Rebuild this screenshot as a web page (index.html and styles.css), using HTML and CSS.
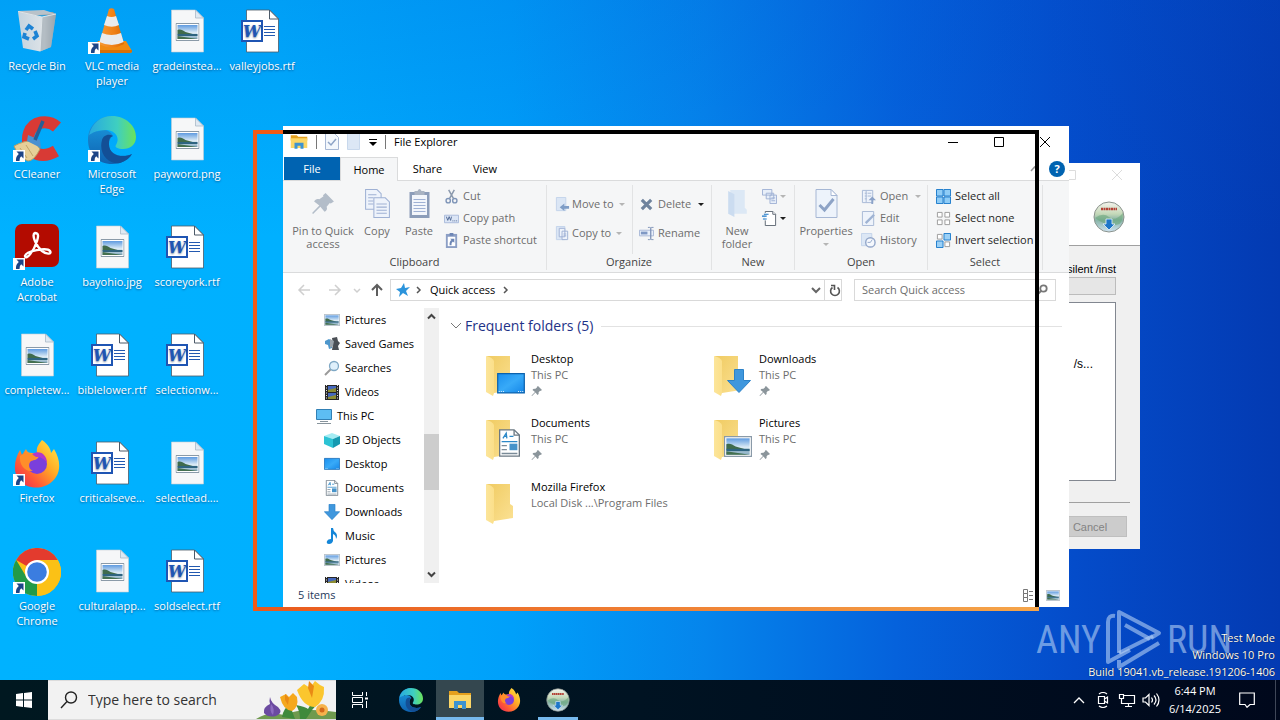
FILE: index.html
```html
<!DOCTYPE html>
<html lang="en">
<head>
<meta charset="utf-8">
<title>Desktop</title>
<link rel="stylesheet" href="styles.css">
</head>
<body>
<svg class="sprite" aria-hidden="true">
  <defs>
    <linearGradient id="g-sky" x1="0" y1="0" x2="0" y2="1"><stop offset="0" stop-color="#5f9be0"/><stop offset=".55" stop-color="#dcebf5"/><stop offset="1" stop-color="#7fa6bd"/></linearGradient>
    <linearGradient id="g-fold" x1="0" y1="0" x2="1" y2="0"><stop offset="0" stop-color="#fce59a"/><stop offset="1" stop-color="#fbdf8a"/></linearGradient>
    <linearGradient id="g-back" x1="0" y1="0" x2="1" y2="1"><stop offset="0" stop-color="#f0cb62"/><stop offset="1" stop-color="#fbe193"/></linearGradient>
    <linearGradient id="g-edge1" x1="0" y1="0" x2="1" y2="0"><stop offset="0" stop-color="#27a9e0"/><stop offset=".6" stop-color="#3fcfc0"/><stop offset="1" stop-color="#6be35a"/></linearGradient>
    <linearGradient id="g-edge2" x1="0" y1="0" x2="0" y2="1"><stop offset="0" stop-color="#1b9de2"/><stop offset="1" stop-color="#0f62b0"/></linearGradient>
    <linearGradient id="g-fox" x1="1" y1="0" x2="0" y2="1"><stop offset="0" stop-color="#fff04a"/><stop offset=".4" stop-color="#ffab26"/><stop offset=".7" stop-color="#ff5a36"/><stop offset="1" stop-color="#e8205c"/></linearGradient>
    <linearGradient id="g-bin" x1="0" y1="0" x2="1" y2="0"><stop offset="0" stop-color="#c3d3df"/><stop offset=".7" stop-color="#dfe4e8"/><stop offset="1" stop-color="#9fa9b1"/></linearGradient>
    <linearGradient id="g-blue" x1="0" y1="0" x2="1" y2="1"><stop offset="0" stop-color="#1b8fee"/><stop offset=".5" stop-color="#38aaf8"/><stop offset="1" stop-color="#1486e8"/></linearGradient>
    <linearGradient id="g-cone" x1="0" y1="0" x2="1" y2="0"><stop offset="0" stop-color="#f79a35"/><stop offset=".6" stop-color="#f08014"/><stop offset="1" stop-color="#d96a05"/></linearGradient>
    <linearGradient id="g-globe" x1="0" y1="0" x2="0" y2="1"><stop offset="0" stop-color="#f5f4ee"/><stop offset=".4" stop-color="#c4d8b8"/><stop offset=".6" stop-color="#86b3a6"/><stop offset="1" stop-color="#cfe3f2"/></linearGradient>

    <symbol id="shortcut" viewBox="0 0 12 12"><path fill="#fff" d="M0 0h12v12H0z"/><path fill="#1d4587" d="M3.500 1.500h7v7L8.200 6.300Q6.500 7.500 6.500 11H3Q2.500 6.500 5.800 4z"/></symbol>
    <symbol id="photo" viewBox="0 0 24 18"><path fill="#fff" stroke="#8a9aa8" d="M.5.500h23v17H.5z"/><path fill="url(#g-sky)" d="M2 2h20v14H2z"/><path fill="#3f6b4c" d="M2 7c3-1 5 0 8 2l9 2.500H2z"/><path fill="#2e6480" d="M2 11h20v2H2z"/><path fill="#44704f" d="M2 16h20l-20-3z"/></symbol>
    <symbol id="file-image" viewBox="0 0 48 48"><path fill="#f6f7f8" stroke="#c6cdd3" stroke-width=".6" d="M8.500 2h24l8 8v34h-32z"/><path fill="#dfe9f2" stroke="#a9b9c7" stroke-width=".8" d="M32.500 2v8h8z"/><use href="#photo" x="12.500" y="15" width="24" height="18"/></symbol>
    <symbol id="file-word" viewBox="0 0 48 48"><path fill="#fff" stroke="#4c5a68" stroke-width=".8" d="M8.500 2h23l9 9v33h-32z"/><path fill="#fff" stroke="#4c5a68" stroke-width="1" d="M31.500 2v9h9z"/><path stroke="#2359b0" d="M26 18.500h11M26 21.500h11M26 24.500h11M26 27.500h11"/><path fill="#fff" stroke="#1f55b3" stroke-width="2" d="M4 13h20v20H4z"/><text x="14" y="29" text-anchor="middle" class="word-mark">W</text></symbol>

    <symbol id="bin" viewBox="0 0 48 48"><path fill="#8d989f" d="M5 4 40 4 43 7 10 8z"/><path fill="#b9c2c9" d="M5 3l26-1 12 4-33 2z"/><path fill="url(#g-bin)" d="M5 4l5 36 17 3.500 11-4.500 5-33-14 3z"/><path fill="#98a3ab" opacity=".6" d="M29 9l14-3-5 33-11 4.500z"/><path fill="none" stroke="#dfe5e9" d="M5 3.500l24 5.500 14-3M29 9l-2 34"/><g fill="none" stroke="#1d83d4" stroke-width="3.600"><path d="M13 22l3-4 4 3M22 23l2 5-4 3M16 31l-5-2 1-4"/></g></symbol>
    <symbol id="vlc" viewBox="0 0 48 48"><path fill="#f08a10" d="M10 33 38 33 44 43Q44 45 41 45H12Q6 45 5 43z"/><path fill="#d87006" d="M5 42h39v2q-1 1-3 1H8q-3-1-3-3z"/><path fill="url(#g-cone)" d="M21 1q2.500-1.500 5 0L36 36Q24 43 11 36z"/><path fill="#e9ebec" d="M19 8q4.500 2 9 0l3 9q-7 3.500-15 0zM14 25q9.500 4 19 0l2.600 9Q24 40 11.400 34z"/></symbol>
    <symbol id="ccleaner" viewBox="0 0 48 48"><path fill="none" stroke="#d83a35" stroke-width="12" d="M44 11C35 3 20 5 16 17c-5 15 8 29 27 18"/><path fill="#e6cf98" stroke="#b99d62" d="M1 30q11-6 20-5l6 8q-6 12-12 12-10-4-14-15z"/><path fill="none" stroke="#c2a568" d="M7 32l7 10M13 29l7 11"/><path fill="#4a90d0" d="M15 19l12 5 1 8-14-7z"/><path stroke="#275f95" stroke-width="3.500" d="M22 24L30 5"/></symbol>
    <symbol id="edge" viewBox="0 0 48 48"><path fill="url(#g-edge2)" d="M24 0C10 0 0 10 0 24s10 24 24 24c9 0 16-4 20-10-9 4-23 2-23-10 0-4 2-7 4-8-6-12-22-4-25 5z"/><path fill="#134f96" d="M14 24c-4 15 8 25 18 23 6-2 10-5 12-9-10 5-24 1-23-11 0-4 1-6 4-7-5-3-10 0-11 4z"/><path fill="url(#g-edge1)" d="M1 19C4 7 13 0 24 0c14 0 24 10 24 21 0 8-6 12-13 12-5 0-9-2-7-4 5-8-2-15-10-15C9 14 4 17 1 19z"/></symbol>
    <symbol id="acrobat" viewBox="0 0 48 48"><rect x="2" y="0" width="44" height="43" rx="7" fill="#b30b00"/><path fill="none" stroke="#fff" stroke-width="2.400" d="M22 9c-4 1 1 13 7 18 5 4 10 3 8 0-3-4-24 0-25 5 1 5 9-5 12-15 2-6 1-8-2-8z"/></symbol>
    <symbol id="firefox" viewBox="0 0 48 48"><path fill="url(#g-fox)" d="M29 0c7 5 9 10 9 13l3-4c6 10 7 20 2 28-8 13-28 14-37 3C-1 31 2 18 7 10l2 5 4-6c1 3 3 4 6 4h5c-1-6 2-9 5-13z"/><circle cx="24" cy="24" r="10" fill="#7a3fdc"/><path fill="#ff8e2a" d="M7 16c5-4 10-3 13-1l6 1c-1 4-5 4-8 5-4 4-1 9 2 10-9 1-14-7-13-15z"/><path fill="#b338c8" d="M19 14c8-5 15 1 15 9-3-5-7-6-11-6z"/></symbol>
    <symbol id="chrome" viewBox="0 0 48 48"><circle cx="24" cy="24" r="24" fill="#fbc116"/><path fill="#e33b2e" d="M24 24L3.200 12A24 24 0 0 1 44.800 12H24z"/><path fill="#229a48" d="M24 24L24 48A24 24 0 0 1 3.200 12L14 30z"/><path fill="#fbc116" d="M24 48l10.400-18L34 12h10.800A24 24 0 0 1 24 48z"/><circle cx="24" cy="24" r="12" fill="#fff"/><circle cx="24" cy="24" r="9.800" fill="#3b7de0"/></symbol>
    <symbol id="setup" viewBox="0 0 32 32"><circle cx="16" cy="16" r="15" fill="url(#g-globe)" stroke="#8b938d"/><path fill="#6aa77b" opacity=".6" d="M2 17q8-6 14-1t14-4q0 12-7 12-11 1-21-7z"/><path stroke="#b44136" stroke-width="2.500" stroke-dasharray="2 .5" d="M8 8h16"/><path fill="#1d76c8" stroke="#e9f4fb" stroke-width=".8" d="M13 18h6v5h3l-6 6-6-6h3z"/></symbol>
    <symbol id="explorer" viewBox="0 0 24 20"><path fill="#e5a01d" d="M1 1h8l2 2h12v5H1z"/><path fill="#fbd667" d="M1 5h22v13H1z"/><path fill="#3d93d1" d="M6 11h12v8h-4v-4h-4v4H6z"/></symbol>

    <symbol id="pin" viewBox="0 0 24 24"><path fill="currentColor" d="M14 2l8 8-3 2-1-.500-3 3.500c1 2 0 4-2 5l-4-5-7 7-1-1 7-7-5-4c1-2 3-3 5-2l4-3-.500-1z"/></symbol>
    <symbol id="copy" viewBox="0 0 24 28"><g fill="#eef3fb" stroke="#9fb1d4"><path d="M.5.500h11l4 4v15H.5z"/><path d="M8.500 8.500h11l4 4v15h-15z"/></g><path stroke="#9fb1d4" d="M3 5.500h8M3 8.500h5M3 11.500h5M3 14.500h5M11 14.500h10M11 17.500h10M11 20.500h10M11 23.500h10"/></symbol>
    <symbol id="paste" viewBox="0 0 22 29"><path fill="#8c9db9" d="M1 3h20v26H1z"/><path fill="#f3f6fb" d="M3.500 6h15v20h-15z"/><path fill="#a9b3c2" d="M6 2h3q2-4 4 0h3v4H6z"/><path stroke="#9fb1d4" d="M5 10.500h12M5 13.500h12M5 16.500h12M5 19.500h12M5 22.500h12"/></symbol>
    <symbol id="cut" viewBox="0 0 16 16"><path fill="none" stroke="#8b99ad" stroke-width="1.600" d="M5 1l5 9M11 1L6 10"/><g fill="none" stroke="#7f95b8" stroke-width="1.500"><circle cx="4.500" cy="12.500" r="2.300"/><circle cx="11.500" cy="12.500" r="2.300"/></g></symbol>
    <symbol id="path" viewBox="0 0 16 16"><path fill="#dbe5f5" stroke="#a9bada" d="M.5 4.500h15v8H.5z"/><path fill="none" stroke="#4f6794" d="M2.500 6l1.500 4 1.500-4L7 10l1-4M9 10.500h1M11 10.500h1M13 10.500h1"/></symbol>
    <symbol id="shortpaste" viewBox="0 0 16 16"><path fill="#8c9fc5" d="M2 1h12v15H2z"/><path fill="#fff" d="M4 4h8v10H4z"/><path fill="#6d86b5" d="M6 0h4v3H6zM6.500 6H11v4.500L9.500 9q-2 1-1.500 4H6q-.5-4 2-5.500z"/></symbol>
    <symbol id="move" viewBox="0 0 16 16"><path fill="#dbe6f5" stroke="#c3d3ea" d="M1.500.500h10v14h-10z"/><path fill="#7f9dc6" d="M5 11l5-4v2.500h5v3h-5V15z"/></symbol>
    <symbol id="copyto" viewBox="0 0 16 16"><path fill="#dbe6f5" stroke="#c3d3ea" d="M1.500.500h9v14h-9z"/><path fill="#eef3fb" stroke="#9fb1d4" d="M4.500 2.500h6v9h-6zM7.500 5.500h6v9h-6zM9 8.500h3M9 10.500h3"/></symbol>
    <symbol id="delete" viewBox="0 0 16 16"><path stroke="#6f839d" stroke-width="3.400" d="M3 3l10 10M13 3L3 13"/></symbol>
    <symbol id="rename" viewBox="0 0 16 16"><path fill="#e8effa" stroke="#a7b7d6" d="M.5 4.500h15v6H.5z"/><path fill="#7f98c4" d="M2 6h7v3H2z"/><path fill="none" stroke="#7f93b8" d="M9.500 1.500h2q1 0 1 1v11q0 1-1 1h-2M15.500 1.500h-2q-1 0-1 1v11q0 1 1 1h2"/></symbol>
    <symbol id="newfolder" viewBox="0 0 20 28"><path fill="#dce8f5" d="M3 1h14v17l2 2v4H4z"/><path fill="#cbdcf0" d="M1 2l6 3v22l-6-3z"/></symbol>
    <symbol id="newitem" viewBox="0 0 16 16"><g fill="#e8eff9" stroke="#9fb1d4"><path d="M.5.500h10v6H.5zM4.500 4.500h8v6h-8zM8.500 6.500h7v9h-7z"/></g><path stroke="#9fb1d4" d="M10 9.500h4M10 12.500h4"/></symbol>
    <symbol id="easy" viewBox="0 0 16 16"><path fill="#fff" stroke="#5b6470" d="M3.500.500h8l3 3v12h-11z"/><path fill="#fff" stroke="#5b6470" d="M11.500.500v3h3"/><path stroke="#fff" stroke-width="2" d="M3.500 2v8"/><path stroke="#1b77c8" stroke-width="1.200" d="M2 3.500h5M0 5.500h5M1 8.500h4"/></symbol>
    <symbol id="props" viewBox="0 0 22 29"><path fill="#edf3fb" stroke="#a6b7d4" d="M.5.500h15l6 6v22H.5z"/><path fill="#fff" stroke="#a6b7d4" d="M15.500.500v6h6z"/><path fill="none" stroke="#8da3c6" stroke-width="3" d="M4 16l5 5 9-11"/></symbol>
    <symbol id="open" viewBox="0 0 16 16"><path fill="#eef3fb" stroke="#a6b7d4" d="M1.500 1.500h11v13h-11z"/><path stroke="#a6b7d4" d="M4 4.500h2M7 4.500h4M4 7.500h2M7 7.500h4M4 10.500h2M5.500 2v12"/><path fill="#8ba2c8" d="M12 8l4 4h-3v4h-2v-4H8z"/></symbol>
    <symbol id="edit" viewBox="0 0 16 16"><path fill="#eef3fb" stroke="#a6b7d4" d="M1.500.500h12v15h-12z"/><path stroke="#9fb3d3" stroke-width="2.500" d="M5 13l9-9"/></symbol>
    <symbol id="history" viewBox="0 0 16 16"><path fill="#dce7f5" stroke="#c3d3ea" d="M.5.500h11v13H.5z"/><circle cx="10" cy="10" r="5" fill="#f5f8fd" stroke="#93a7ca" stroke-width="1.500"/><path fill="none" stroke="#93a7ca" d="M12 7l-2 3H7"/></symbol>
    <symbol id="selall" viewBox="0 0 16 16"><g fill="#8fccf6" stroke="#1979ca"><path d="M.5.500h7v7h-7zM8.500.500h7v7h-7zM.5 8.500h7v7h-7zM8.500 8.500h7v7h-7z"/></g></symbol>
    <symbol id="selnone" viewBox="0 0 16 16"><path fill="#fff" stroke="#9a9a9a" d="M1.500 1.500h5v5h-5zM9.500 1.500h5v5h-5zM1.500 9.500h5v5h-5zM9.500 9.500h5v5h-5z"/></symbol>
    <symbol id="selinv" viewBox="0 0 16 16"><path fill="#fff" stroke="#9a9a9a" d="M1.500 1.500h5v5h-5zM9.500 9.500h5v5h-5z"/><path fill="#9bd0f6" stroke="#1979ca" d="M8.500.500h7v7h-7zM.5 8.500h7v7h-7z"/></symbol>

    <symbol id="n-pic" viewBox="0 0 16 16"><use href="#photo" y="2" width="16" height="12"/></symbol>
    <symbol id="n-games" viewBox="0 0 16 16"><path fill="#4e97cc" d="M1 5l4-2 3 2v7l-3 1-1-4-3-1z"/><path fill="#4a4f55" d="M8 2l5-1 1 4 2 2-2 3 1 4H8l1-6z"/><path fill="#9aa3ab" d="M6 3l4 2-1 5-3 2z"/></symbol>
    <symbol id="n-search" viewBox="0 0 16 16"><path stroke="#9a9a9a" stroke-width="2" d="M1 15l6-6"/><circle cx="10" cy="6" r="4.500" fill="#dff0fb" stroke="#7fa8c5" stroke-width="1.300"/></symbol>
    <symbol id="n-video" viewBox="0 0 16 16"><path fill="#262626" d="M1 1h14v15H1z"/><path stroke="#e8e8e8" stroke-dasharray="1 1.500" d="M2.500 1v15M13.500 1v15"/><path fill="#4568bd" d="M4 2h8v6H4zM4 9h8v6H4z"/><path fill="#8d8d32" d="M4 6l8-2v4H4zM4 13l8-2v4H4z"/></symbol>
    <symbol id="n-pc" viewBox="0 0 16 16"><path fill="#5dbdf3" stroke="#3180b5" d="M.5 1.500h15v10H.5z"/><path stroke="#87949c" d="M4 13.500h8M1 15.500h14"/></symbol>
    <symbol id="n-3d" viewBox="0 0 16 16"><path fill="#a5ecf3" d="M0 4l8-3 8 3-7 3z"/><path fill="#2cc3d4" d="M0 4l9 3v9l-9-4z"/><path fill="#1599b0" d="M9 7l7-3v8l-7 4z"/></symbol>
    <symbol id="n-desk" viewBox="0 0 16 12"><path fill="url(#g-blue)" stroke="#0b62ad" stroke-width=".7" d="M.4.400h15.200v11H.4z"/><path stroke="#d7ecfb" stroke-dasharray=".6 .6" stroke-width=".6" d="M1 10.600h3M12 10.600h3"/></symbol>
    <symbol id="n-doc" viewBox="0 0 16 21"><path fill="#fff" stroke="#6b7883" d="M.5.500h11l4 4v16H.5z"/><path fill="none" stroke="#6b7883" d="M11.500.500v4h4"/><path fill="none" stroke="#2b88c8" d="M3 7l2.500-4L6 7M4 5.500h2M8 5.500h3M2 9.500h12"/><path stroke="#7a8b98" d="M2 12.500h4M2 15.500h4M2 18.500h12"/><path fill="#4693ca" d="M8 11h6v5H8z"/></symbol>
    <symbol id="n-down" viewBox="0 0 24 24"><path fill="#3f97dd" stroke="#2c82c8" d="M7.500.500h9v11h7L12 23.500.5 11.500h7z"/></symbol>
    <symbol id="n-music" viewBox="0 0 16 16"><path fill="#1486d8" d="M7 0h2q0 3 3 5 2 3 0 6 0-4-3-5v7q-1 3-4 3t-2-3q1-2 4-2z"/></symbol>
    <symbol id="folder" viewBox="0 0 40 42"><path fill="url(#g-back)" d="M2 1h23v20l3 2v12l-19 3z"/><path fill="url(#g-fold)" d="M1 1q6 1 8 5v32l-1 3-7-4z"/></symbol>
    <symbol id="f-desk" viewBox="0 0 40 42"><use href="#folder"/><use href="#n-desk" x="12" y="18" width="28" height="21"/></symbol>
    <symbol id="f-down" viewBox="0 0 40 42"><use href="#folder"/><use href="#n-down" x="14" y="14" width="24" height="24"/></symbol>
    <symbol id="f-doc" viewBox="0 0 40 42"><use href="#folder"/><use href="#n-doc" x="14" y="10" width="21" height="28"/></symbol>
    <symbol id="f-pic" viewBox="0 0 40 42"><use href="#folder"/><use href="#photo" x="11" y="17" width="28" height="21"/></symbol>
  </defs>
</svg>

<main class="desktop">
  <ul class="icons">
    <li><svg class="app"><use href="#bin"/></svg><span>Recycle Bin</span></li>
    <li><svg class="app"><use href="#ccleaner"/></svg><svg class="arrow"><use href="#shortcut"/></svg><span>CCleaner</span></li>
    <li><svg class="app"><use href="#acrobat"/></svg><svg class="arrow"><use href="#shortcut"/></svg><span>Adobe<br>Acrobat</span></li>
    <li><svg class="app"><use href="#file-image"/></svg><span>completew...</span></li>
    <li><svg class="app"><use href="#firefox"/></svg><svg class="arrow"><use href="#shortcut"/></svg><span>Firefox</span></li>
    <li><svg class="app"><use href="#chrome"/></svg><svg class="arrow"><use href="#shortcut"/></svg><span>Google<br>Chrome</span></li>
    <li><svg class="app"><use href="#vlc"/></svg><svg class="arrow"><use href="#shortcut"/></svg><span>VLC media<br>player</span></li>
    <li><svg class="app"><use href="#edge"/></svg><svg class="arrow"><use href="#shortcut"/></svg><span>Microsoft<br>Edge</span></li>
    <li><svg class="app"><use href="#file-image"/></svg><span>bayohio.jpg</span></li>
    <li><svg class="app"><use href="#file-word"/></svg><span>biblelower.rtf</span></li>
    <li><svg class="app"><use href="#file-word"/></svg><span>criticalseve...</span></li>
    <li><svg class="app"><use href="#file-image"/></svg><span>culturalapp...</span></li>
    <li><svg class="app"><use href="#file-image"/></svg><span>gradeinstea...</span></li>
    <li><svg class="app"><use href="#file-image"/></svg><span>payword.png</span></li>
    <li><svg class="app"><use href="#file-word"/></svg><span>scoreyork.rtf</span></li>
    <li><svg class="app"><use href="#file-word"/></svg><span>selectionw...</span></li>
    <li><svg class="app"><use href="#file-image"/></svg><span>selectlead....</span></li>
    <li><svg class="app"><use href="#file-word"/></svg><span>soldselect.rtf</span></li>
    <li><svg class="app"><use href="#file-word"/></svg><span>valleyjobs.rtf</span></li>
  </ul>

  <section class="setup" aria-label="Setup">
    <header class="setup-head">
      <svg viewBox="0 0 60 12" width="60" height="12" fill="none" stroke="#dcdcdc"><path d="M1.500 1.500h9v9h-9zM47 1l10 10M57 1L47 11"/></svg>
      <svg class="setup-logo"><use href="#setup"/></svg>
    </header>
    <div class="setup-body">
      <p class="setup-line">silent /inst</p>
      <div class="setup-progress"></div>
      <div class="setup-list">/s...</div>
    </div>
    <footer class="setup-foot"><button class="setup-cancel" disabled>Cancel</button></footer>
  </section>

  <section class="window" aria-label="File Explorer">
    <header class="titlebar">
      <svg class="t-app"><use href="#explorer"/></svg>
      <i class="t-sep"></i>
      <svg width="14" height="17" viewBox="0 0 14 17"><path fill="#f3f7fc" stroke="#a6b7d4" d="M.5.500h9l4 4v12H.5z"/><path fill="none" stroke="#8da3c6" stroke-width="1.500" d="M3 9l3 3 5-6"/></svg>
      <svg width="14" height="17" viewBox="0 0 14 17"><path fill="#dce7f5" stroke="#c8d8ec" d="M.5.500h12v16H.5z"/></svg>
      <svg width="8" height="8" viewBox="0 0 8 8"><path d="M0 1h8v1H0zM0 4h8L4 8z"/></svg>
      <i class="t-sep"></i>
      <h1>File Explorer</h1>
      <div class="controls">
        <button aria-label="Minimize"><svg width="12" height="12" viewBox="0 0 12 12" fill="none" stroke="#000"><path d="M1 6.500h10"/></svg></button>
        <button aria-label="Maximize"><svg width="12" height="12" viewBox="0 0 12 12" fill="none" stroke="#000"><path d="M1.500 1.500h9v9h-9z"/></svg></button>
        <button aria-label="Close"><svg width="12" height="12" viewBox="0 0 12 12" fill="none" stroke="#000"><path d="M1 1l10 10M11 1L1 11"/></svg></button>
      </div>
    </header>
    <nav class="tabs">
      <button class="tab file">File</button>
      <button class="tab active">Home</button>
      <button class="tab">Share</button>
      <button class="tab">View</button>
      <div class="tab-end">
        <svg width="9" height="6" viewBox="0 0 9 6" fill="none" stroke="#9a9a9a" stroke-width="1.500"><path d="M1 5l3.500-4L8 5"/></svg>
        <button class="help" aria-label="Help">?</button>
      </div>
    </nav>
    <div class="ribbon">
      <div class="group g-clip">
        <div class="tools">
          <button class="big b-pin"><svg class="pin-big"><use href="#pin"/></svg>Pin to Quick access</button>
          <button class="big"><svg><use href="#copy"/></svg>Copy</button>
          <button class="big"><svg><use href="#paste"/></svg>Paste</button>
          <div class="stack">
            <button><svg><use href="#cut"/></svg>Cut</button>
            <button><svg><use href="#path"/></svg>Copy path</button>
            <button><svg><use href="#shortpaste"/></svg>Paste shortcut</button>
          </div>
        </div>
        <h2>Clipboard</h2>
      </div>
      <div class="group g-org">
        <div class="tools">
          <div class="stack wide">
            <button><svg><use href="#move"/></svg>Move to<i class="drop"></i></button>
            <button><svg><use href="#copyto"/></svg>Copy to<i class="drop"></i></button>
          </div>
          <div class="stack wide ruled">
            <button><svg><use href="#delete"/></svg>Delete<i class="drop dark"></i></button>
            <button><svg><use href="#rename"/></svg>Rename</button>
          </div>
        </div>
        <h2>Organize</h2>
      </div>
      <div class="group g-new">
        <div class="tools">
          <button class="big"><svg><use href="#newfolder"/></svg>New<br>folder</button>
          <div class="stack">
            <button aria-label="New item"><svg><use href="#newitem"/></svg><i class="drop"></i></button>
            <button aria-label="Easy access"><svg><use href="#easy"/></svg><i class="drop dark"></i></button>
          </div>
        </div>
        <h2>New</h2>
      </div>
      <div class="group g-open">
        <div class="tools">
          <button class="big b-prop"><svg><use href="#props"/></svg>Properties<i class="drop"></i></button>
          <div class="stack">
            <button><svg><use href="#open"/></svg>Open<i class="drop"></i></button>
            <button><svg><use href="#edit"/></svg>Edit</button>
            <button><svg><use href="#history"/></svg>History</button>
          </div>
        </div>
        <h2>Open</h2>
      </div>
      <div class="group g-sel">
        <div class="tools">
          <div class="stack on">
            <button><svg><use href="#selall"/></svg>Select all</button>
            <button><svg><use href="#selnone"/></svg>Select none</button>
            <button><svg><use href="#selinv"/></svg>Invert selection</button>
          </div>
        </div>
        <h2>Select</h2>
      </div>
    </div>
    <div class="address">
      <svg class="arrows" viewBox="0 0 88 16" fill="none" stroke="#cfcfcf" stroke-width="1.500"><path d="M14 8H3M8 3L3 8l5 5M33 8h11M39 3l5 5-5 5"/><path d="M58 7l3 3 3-3"/><path stroke="#5e5e5e" stroke-width="2" d="M81 14V3M76 8l5-5 5 5"/></svg>
      <div class="crumbs">
        <svg width="16" height="16" viewBox="0 0 16 16"><path fill="#2b94dc" d="M9 1l1 5 5-1-4 4 2 5-5-3-4 4 1-5-4-3 5-1z"/></svg>
        <svg width="6" height="8" viewBox="0 0 6 8" fill="none" stroke="#555" stroke-width="1.500"><path d="M1 1l3 3-3 3"/></svg>
        <span>Quick access</span>
        <svg width="6" height="8" viewBox="0 0 6 8" fill="none" stroke="#555" stroke-width="1.500"><path d="M1 1l3 3-3 3"/></svg>
        <svg class="crumb-drop" width="10" height="7" viewBox="0 0 10 7" fill="none" stroke="#666" stroke-width="2"><path d="M1 1l4 4 4-4"/></svg>
        <button class="refresh" aria-label="Refresh"><svg width="12" height="13" viewBox="0 0 12 13" fill="none" stroke="#555" stroke-width="1.600"><path d="M8.500 3.500a4.400 4.400 0 1 1-5 0M2 1.500h3.500V6"/></svg></button>
      </div>
      <div class="search">
        <input type="search" aria-label="Search Quick access" placeholder="Search Quick access">
        <svg width="12" height="12" viewBox="0 0 12 12" fill="none" stroke="#777" stroke-width="1.800"><circle cx="7.500" cy="4.500" r="3.200"/><path d="M5 7l-4 4"/></svg>
      </div>
    </div>
    <div class="body">
      <ul class="tree">
        <li><svg><use href="#n-pic"/></svg>Pictures</li>
        <li><svg><use href="#n-games"/></svg>Saved Games</li>
        <li><svg><use href="#n-search"/></svg>Searches</li>
        <li><svg><use href="#n-video"/></svg>Videos</li>
        <li class="root"><svg><use href="#n-pc"/></svg>This PC</li>
        <li><svg><use href="#n-3d"/></svg>3D Objects</li>
        <li><svg><use href="#n-desk"/></svg>Desktop</li>
        <li><svg><use href="#n-doc"/></svg>Documents</li>
        <li><svg><use href="#n-down"/></svg>Downloads</li>
        <li><svg><use href="#n-music"/></svg>Music</li>
        <li><svg><use href="#n-pic"/></svg>Pictures</li>
        <li><svg><use href="#n-video"/></svg>Videos</li>
      </ul>
      <div class="scroll">
        <svg width="9" height="7" viewBox="0 0 9 7" fill="none" stroke="#444" stroke-width="2"><path d="M1 5.500L4.500 2 8 5.500"/></svg>
        <i class="thumb"></i>
        <svg width="9" height="7" viewBox="0 0 9 7" fill="none" stroke="#444" stroke-width="2"><path d="M1 1.500L4.500 5 8 1.500"/></svg>
      </div>
      <div class="content">
        <h2><svg width="12" height="8" viewBox="0 0 12 8" fill="none" stroke="#777"><path d="M1 1l5 5 5-5"/></svg>Frequent folders (5)</h2>
        <div class="tiles">
          <div class="tile"><svg><use href="#f-desk"/></svg><p><b>Desktop</b><span>This PC</span><svg class="pin"><use href="#pin"/></svg></p></div>
          <div class="tile"><svg><use href="#f-down"/></svg><p><b>Downloads</b><span>This PC</span><svg class="pin"><use href="#pin"/></svg></p></div>
          <div class="tile"><svg><use href="#f-doc"/></svg><p><b>Documents</b><span>This PC</span><svg class="pin"><use href="#pin"/></svg></p></div>
          <div class="tile"><svg><use href="#f-pic"/></svg><p><b>Pictures</b><span>This PC</span><svg class="pin"><use href="#pin"/></svg></p></div>
          <div class="tile"><svg><use href="#folder"/></svg><p><b>Mozilla Firefox</b><span>Local Disk ...\Program Files</span></p></div>
        </div>
      </div>
    </div>
    <footer class="status">
      <span>5 items</span>
      <svg width="17" height="13" viewBox="0 0 17 13" fill="none" stroke="#777"><path d="M.5.500h4v4h-4zM.5 4.500h4v4h-4zM.5 8.500h4v4h-4zM6 2.500h4M12 2.500h4M6 6.500h4M12 6.500h4M6 10.500h4M12 10.500h4"/></svg>
      <svg width="14" height="11"><use href="#photo"/></svg>
    </footer>
  </section>
  <div class="frame"></div>

  <div class="watermark">
    <span>ANY</span>
    <svg viewBox="0 0 56 62" fill="none" stroke="currentColor" stroke-width="4" stroke-linejoin="round"><path d="M9 7Q2 6 2 13v40l22-12M13 44V3l40 21-8 5M19 16l25 14M53 34L13 58v-7"/><path d="M13 44l34-17"/></svg>
    <span>RUN</span>
  </div>
  <div class="build">
    <p>Test Mode</p>
    <p>Windows 10 Pro</p>
    <p>Build 19041.vb_release.191206-1406</p>
  </div>
</main>

<footer class="taskbar">
  <button class="start" aria-label="Start"><svg width="16" height="16" viewBox="0 0 16 16"><path fill="#fff" d="M0 2l7-1v6.500H0zM8 .900L16 0v7.500H8zM0 8.500h7V15l-7-1zM8 8.500h8V16l-8-1.100z"/></svg></button>
  <label class="find">
    <svg width="18" height="18" viewBox="0 0 18 18" fill="none" stroke="#222" stroke-width="1.400"><circle cx="11" cy="6.500" r="5.500"/><path d="M7 10.500L1 17"/></svg>
    <input type="text" aria-label="Type here to search" placeholder="Type here to search">
    <svg class="flowers" viewBox="0 0 80 38"><path fill="#6f9a4e" d="M0 38q12-8 28-4 18-8 52-3v7z"/><path fill="#3f8a3c" d="M26 36q2-10 8-12 2 6 5 14zM44 38q0-8-4-14 10 2 12 4 2-6 12-8-8 8-14 18z"/><path fill="#6b4aa0" d="M14 16q1 6 8 10 6 6-2 9-8 2-12-3-1-6 6-9-1-3 0-7z"/><path fill="#8d6bc0" d="M15 23q4 4 2 11-4-4-2-11z"/><path fill="#f5a81c" d="M24 16l6-3 3 3 4-4 4 4q2 10-5 14-9-1-12-14z"/><path fill="#fbc62e" d="M41 9l7-6 6 4 5-7 5 4 4 2q1 14-9 20-12 0-18-17z"/><path fill="#e98a14" d="M53 0l5 5-2 12-4-10zM29 13l4 4-1 7-3-5z"/><circle cx="66" cy="29" r="6" fill="#f6b24c"/><circle cx="66" cy="29" r="2.500" fill="#d4691a"/></svg>
  </label>
  <button class="task" aria-label="Task view"><svg width="18" height="16" viewBox="0 0 18 16" fill="none" stroke="#fff"><path d="M1.500 0v3.500h10V0M1.500 5.500h10v5h-10zM1.500 16v-3.500h10V16M15.500 0v4M15.500 9v7"/><path stroke-width="2" d="M14 6.500h3"/></svg></button>
  <div class="apps">
    <button class="task" aria-label="Microsoft Edge"><svg width="24" height="24"><use href="#edge"/></svg></button>
    <button class="task current" aria-label="File Explorer"><svg width="24" height="20"><use href="#explorer"/></svg></button>
    <button class="task" aria-label="Firefox"><svg width="24" height="24"><use href="#firefox"/></svg></button>
    <button class="task running" aria-label="Setup"><svg width="24" height="24"><use href="#setup"/></svg></button>
  </div>
  <div class="tray">
    <svg viewBox="0 0 12 16" fill="none" stroke="#fff" stroke-width="1.300"><path d="M1 11l5-5 5 5"/></svg>
    <svg viewBox="0 0 12 16" fill="none" stroke="#fff" stroke-width="1.200"><path d="M1.500 4.500h6v7h-6zM7.500 7l3-2v6l-3-2M2 2q4-3 8 0M2 14q4 3 8 0"/></svg>
    <svg viewBox="0 0 16 16" fill="none" stroke="#fff" stroke-width="1.200"><path d="M4 3.500h11.500v8H4M.5 2.500h4v4h-4zM2.500 6.500v5H4M9.500 11.500v3M6 14.500h7"/></svg>
    <svg viewBox="0 0 18 16" fill="none" stroke="#fff" stroke-width="1.200"><path d="M1 6h2.500L7 2.500v11L3.500 10H1zM9.500 5.500q2 2.500 0 5M12 3.500q4 4.500 0 9M14.500 1.500q5 6.500 0 13"/></svg>
    <time class="clock">6:44 PM<br>6/14/2025</time>
    <svg class="notes" viewBox="0 0 16 16" fill="none" stroke="#fff" stroke-width="1.200"><path d="M.7 1h14.600v11.500h-4.300L8 15.300 6 12.500H.7z"/></svg>
    <i class="peek"></i>
  </div>
</footer>
</body>
</html>
```
FILE: styles.css
```css
* { box-sizing: border-box; }

body {
  margin: 0;
  height: 100vh;
  display: flex;
  flex-direction: column;
  overflow: hidden;
  font: 11px/16px "Open Sans", "Noto Sans", sans-serif;
  color: #000;
}

button, input { font: inherit; color: inherit; margin: 0; padding: 0; border: 0; background: none; }
h1, h2, p, ul { margin: 0; padding: 0; font: inherit; list-style: none; }
svg { flex: none; display: block; }
.sprite { position: absolute; width: 0; height: 0; }
.word-mark { font: italic bold 16px "DejaVu Serif", serif; fill: #1f55b3; }

/* Desktop */
.desktop {
  flex: 1;
  min-height: 0;
  position: relative;
  overflow: hidden;
  background:
    linear-gradient(to bottom, rgba(0, 80, 205, .18), rgba(0, 100, 220, 0) 35%),
    linear-gradient(to right, #00b2ff 0%, #00b0ff 22%, #00a0fa 40%, #0585ec 55%, #0562dc 70%, #044cca 84%, #033ab2 100%);
}
.icons {
  display: grid;
  grid-auto-flow: column;
  grid-template-rows: repeat(6, 108px);
  grid-auto-columns: 75px;
  justify-content: start;
  color: #fff;
  line-height: 15px;
  text-align: center;
  text-shadow: 0 1px 2px rgba(0, 40, 90, .6);
}
.icons li { position: relative; display: flex; flex-direction: column; align-items: center; gap: 2px; padding: 8px 1px 0 0; }
.icons .app { width: 48px; height: 48px; }
.icons .arrow { position: absolute; left: 13px; top: 42px; width: 12px; height: 12px; }

/* Installer window */
.setup {
  position: absolute; left: 940px; top: 163px; width: 200px; height: 386px;
  display: flex; flex-direction: column;
  background: #f0f0f0;
  font: 11px/14px "Liberation Sans", sans-serif;
}
.setup-head { height: 83px; padding: 6px 15px; display: flex; flex-direction: column; align-items: flex-end; gap: 20px; background: #fff; border-bottom: 1px solid #a0a0a0; }
.setup-logo { width: 32px; height: 32px; }
.setup-body { flex: 1; display: flex; flex-direction: column; margin-right: 10px; padding: 15px 14px 21px 0; border-bottom: 1px solid #a0a0a0; }
.setup-line { text-align: right; line-height: 16px; }
.setup-progress { height: 18px; border: 1px solid #bcbcbc; background: #e6e6e6; }
.setup-list { flex: 1; margin-top: 7px; padding: 54px 22px; font-size: 12px; text-align: right; background: #fff; border: 1px solid #828790; }
.setup-foot { height: 46px; padding: 13px 13px 12px; display: flex; justify-content: flex-end; }
.setup-cancel { width: 74px; color: #838383; background: #ccc; border: 1px solid #bfbfbf; }

/* Explorer window */
.window {
  position: absolute; left: 283px; top: 126px; width: 786px; height: 481px;
  display: flex; flex-direction: column;
  background: #fff;
}
.titlebar { height: 31px; display: flex; align-items: center; gap: 8px; padding-left: 7px; }
.t-app { width: 18px; height: 16px; }
.t-sep { width: 1px; height: 14px; background: #777; }
.controls { margin: 0 1px 0 auto; display: flex; align-self: stretch; }
.controls button { width: 46px; display: grid; place-items: center; }
.tabs { height: 24px; display: flex; border-bottom: 1px solid #dadbdc; padding-left: 1px; }
.tab { width: 56px; margin-bottom: -1px; }
.tab.file { background: #0063b1; color: #fff; margin-bottom: 0; }
.tab.active { width: 58px; background: #f5f6f7; border: 1px solid #dadbdc; border-bottom: 0; }
.tab:nth-child(3) { width: 59px; }
.tab-end { margin-left: auto; display: flex; align-items: center; gap: 10px; padding-right: 4px; }
.help { width: 16px; height: 16px; border-radius: 50%; background: #0063b1; color: #fff; font-weight: bold; }

.ribbon { height: 92px; display: flex; background: #f5f6f7; border-bottom: 1px solid #dadbdc; color: #6d6d6d; }
.group { display: flex; flex-direction: column; margin: 4px 0 2px; border-right: 1px solid #e2e3e4; }
.group h2 { text-align: center; color: #444; }
.tools { height: 70px; display: flex; }
.g-clip { width: 264px; }
.g-org { width: 165px; }
.g-new { width: 83px; }
.g-open { width: 133px; }
.g-sel { width: 115px; }
.big { display: flex; flex-direction: column; align-items: center; width: 42px; padding-top: 4px; line-height: 13px; gap: 6px; }
.big svg { width: 25px; height: 29px; }
.big .pin-big { color: #b3bdc9; }
.b-pin { width: 66px; margin-left: 7px; }
.g-new .big { width: 50px; }
.b-prop { width: 62px; }
.b-prop .drop { margin: 0; }
.stack { display: flex; flex-direction: column; padding-left: 4px; }
.stack button { height: 22px; display: flex; align-items: center; gap: 4px; white-space: nowrap; }
.stack svg { width: 15px; height: 15px; }
.wide { width: 85px; padding: 8px 0 0 8px; gap: 7px; }
.wide button { gap: 2px; }
.ruled { border-left: 1px solid #e2e3e4; width: 79px; padding-left: 6px; }
.ruled button { gap: 4px; }
.on { padding-left: 8px; color: #1e1e1e; }
.drop { border: 3px solid transparent; border-top-color: #b5b5b5; border-bottom: 0; margin-left: 3px; }
.drop.dark { border-top-color: #1e1e1e; }
.g-new .stack { padding-left: 0; }
.g-new .stack button { gap: 0; }

.address { height: 35px; display: flex; align-items: center; gap: 12px; padding: 0 13px 1px; }
.arrows { width: 88px; height: 16px; margin-right: -6px; }
.crumbs { flex: 1; height: 22px; display: flex; align-items: center; gap: 8px; border: 1px solid #d9d9d9; padding-left: 4px; }
.crumbs svg:first-child { margin-right: -3px; }
.crumb-drop { margin-left: auto; margin-right: -5px; }
.refresh { width: 17px; align-self: stretch; border-left: 1px solid #d9d9d9; display: grid; place-items: center; }
.search { width: 202px; height: 22px; display: flex; align-items: center; border: 1px solid #d9d9d9; padding: 0 7px; }
.search input { flex: 1; min-width: 0; outline: 0; }
.search input::placeholder { color: #6d6d6d; opacity: 1; }

.body { flex: 1; min-height: 0; display: flex; }
.tree { width: 141px; overflow: hidden; }
.tree li { height: 24px; display: flex; align-items: center; gap: 5px; padding-left: 41px; white-space: nowrap; }
.tree li.root { padding-left: 33px; }
.tree svg { width: 16px; height: 16px; }
.scroll { width: 15px; display: flex; flex-direction: column; align-items: center; background: #f0f0f0; padding: 5px 0; }
.thumb { width: 15px; height: 56px; margin: 114px 0 auto; background: #cdcdcd; }
.content { flex: 1; padding: 8px 7px 0 11px; }
.content h2 { display: flex; align-items: center; gap: 3px; font-size: 14px; line-height: 20px; color: #1e3287; }
.content h2::after { content: ""; flex: 1; height: 1px; margin-left: 5px; background: #e2e2e2; }
.tiles { display: grid; grid-template-columns: 228px 228px; grid-auto-rows: 64px; padding: 15px 0 0 35px; }
.tile { display: flex; gap: 6px; }
.tile > svg { width: 40px; height: 42px; margin-top: 4px; }
.tile b, .tile span { display: block; font-weight: normal; white-space: nowrap; }
.tile span { color: #6d6d6d; }
.pin { width: 12px; height: 12px; margin-top: 2px; color: #8b959b; }
.status { height: 24px; display: flex; align-items: center; gap: 6px; padding: 0 9px 0 15px; color: #1e395b; }
.status span { margin-right: auto; }

/* Capture outline: orange on the wallpaper, black across the windows */
.frame {
  position: absolute; left: 253px; top: 130px; width: 786px; height: 481px;
  pointer-events: none;
  background:
    linear-gradient(#f15a16, #f15a16) 0 0 / 4px 100% no-repeat,
    linear-gradient(to right, #e9591c, #f5a54a) 0 100% / 100% 4px no-repeat,
    linear-gradient(#000, #000) 100% 0 / 4px 477px no-repeat,
    linear-gradient(to right, #f15a16 30px, #000 30px) 0 0 / 100% 4px no-repeat;
}

.watermark {
  position: absolute; right: 48px; bottom: 9px;
  display: flex; align-items: center; gap: 5px;
  color: rgba(180, 208, 245, .6);
  font: 400 38px/60px "Roboto Condensed", "Liberation Sans Narrow", "Open Sans", sans-serif;
}
.watermark svg { width: 56px; height: 62px; }
.build { position: absolute; right: 5px; bottom: 0; color: #fff; text-align: right; line-height: 17px; text-shadow: 0 0 1px #000; }

/* Taskbar */
.taskbar { height: 40px; display: flex; background: linear-gradient(to right, #001820, #001322 50%, #00081c); color: #fff; }
.start { width: 48px; display: grid; place-items: center; }
.find { width: 288px; display: flex; align-items: center; gap: 10px; padding-left: 12px; background: #f2f2f2; border: 1px solid #dcdcdc; border-width: 1px 0; color: #333; }
.find input { flex: 1; min-width: 0; outline: 0; font-size: 14px; }
.find input::placeholder { color: #333; opacity: 1; }
.flowers { width: 80px; height: 38px; }
.task { width: 48px; display: grid; place-items: center; }
.apps { display: flex; gap: 1px; padding-left: 3px; }
.current { background: #34474f; border-bottom: 3px solid #76b9ed; padding-top: 3px; }
.running { background: linear-gradient(#76b9ed, #76b9ed) center bottom / 40px 3px no-repeat; }
.tray { margin-left: auto; display: flex; align-items: center; }
.tray svg { width: 24px; height: 16px; }
.clock { width: 64px; text-align: center; line-height: 18px; }
.tray .notes { margin: 0 16px 0 8px; }
.peek { width: 1px; height: 40px; margin-right: 4px; background: #3f4758; }
```
